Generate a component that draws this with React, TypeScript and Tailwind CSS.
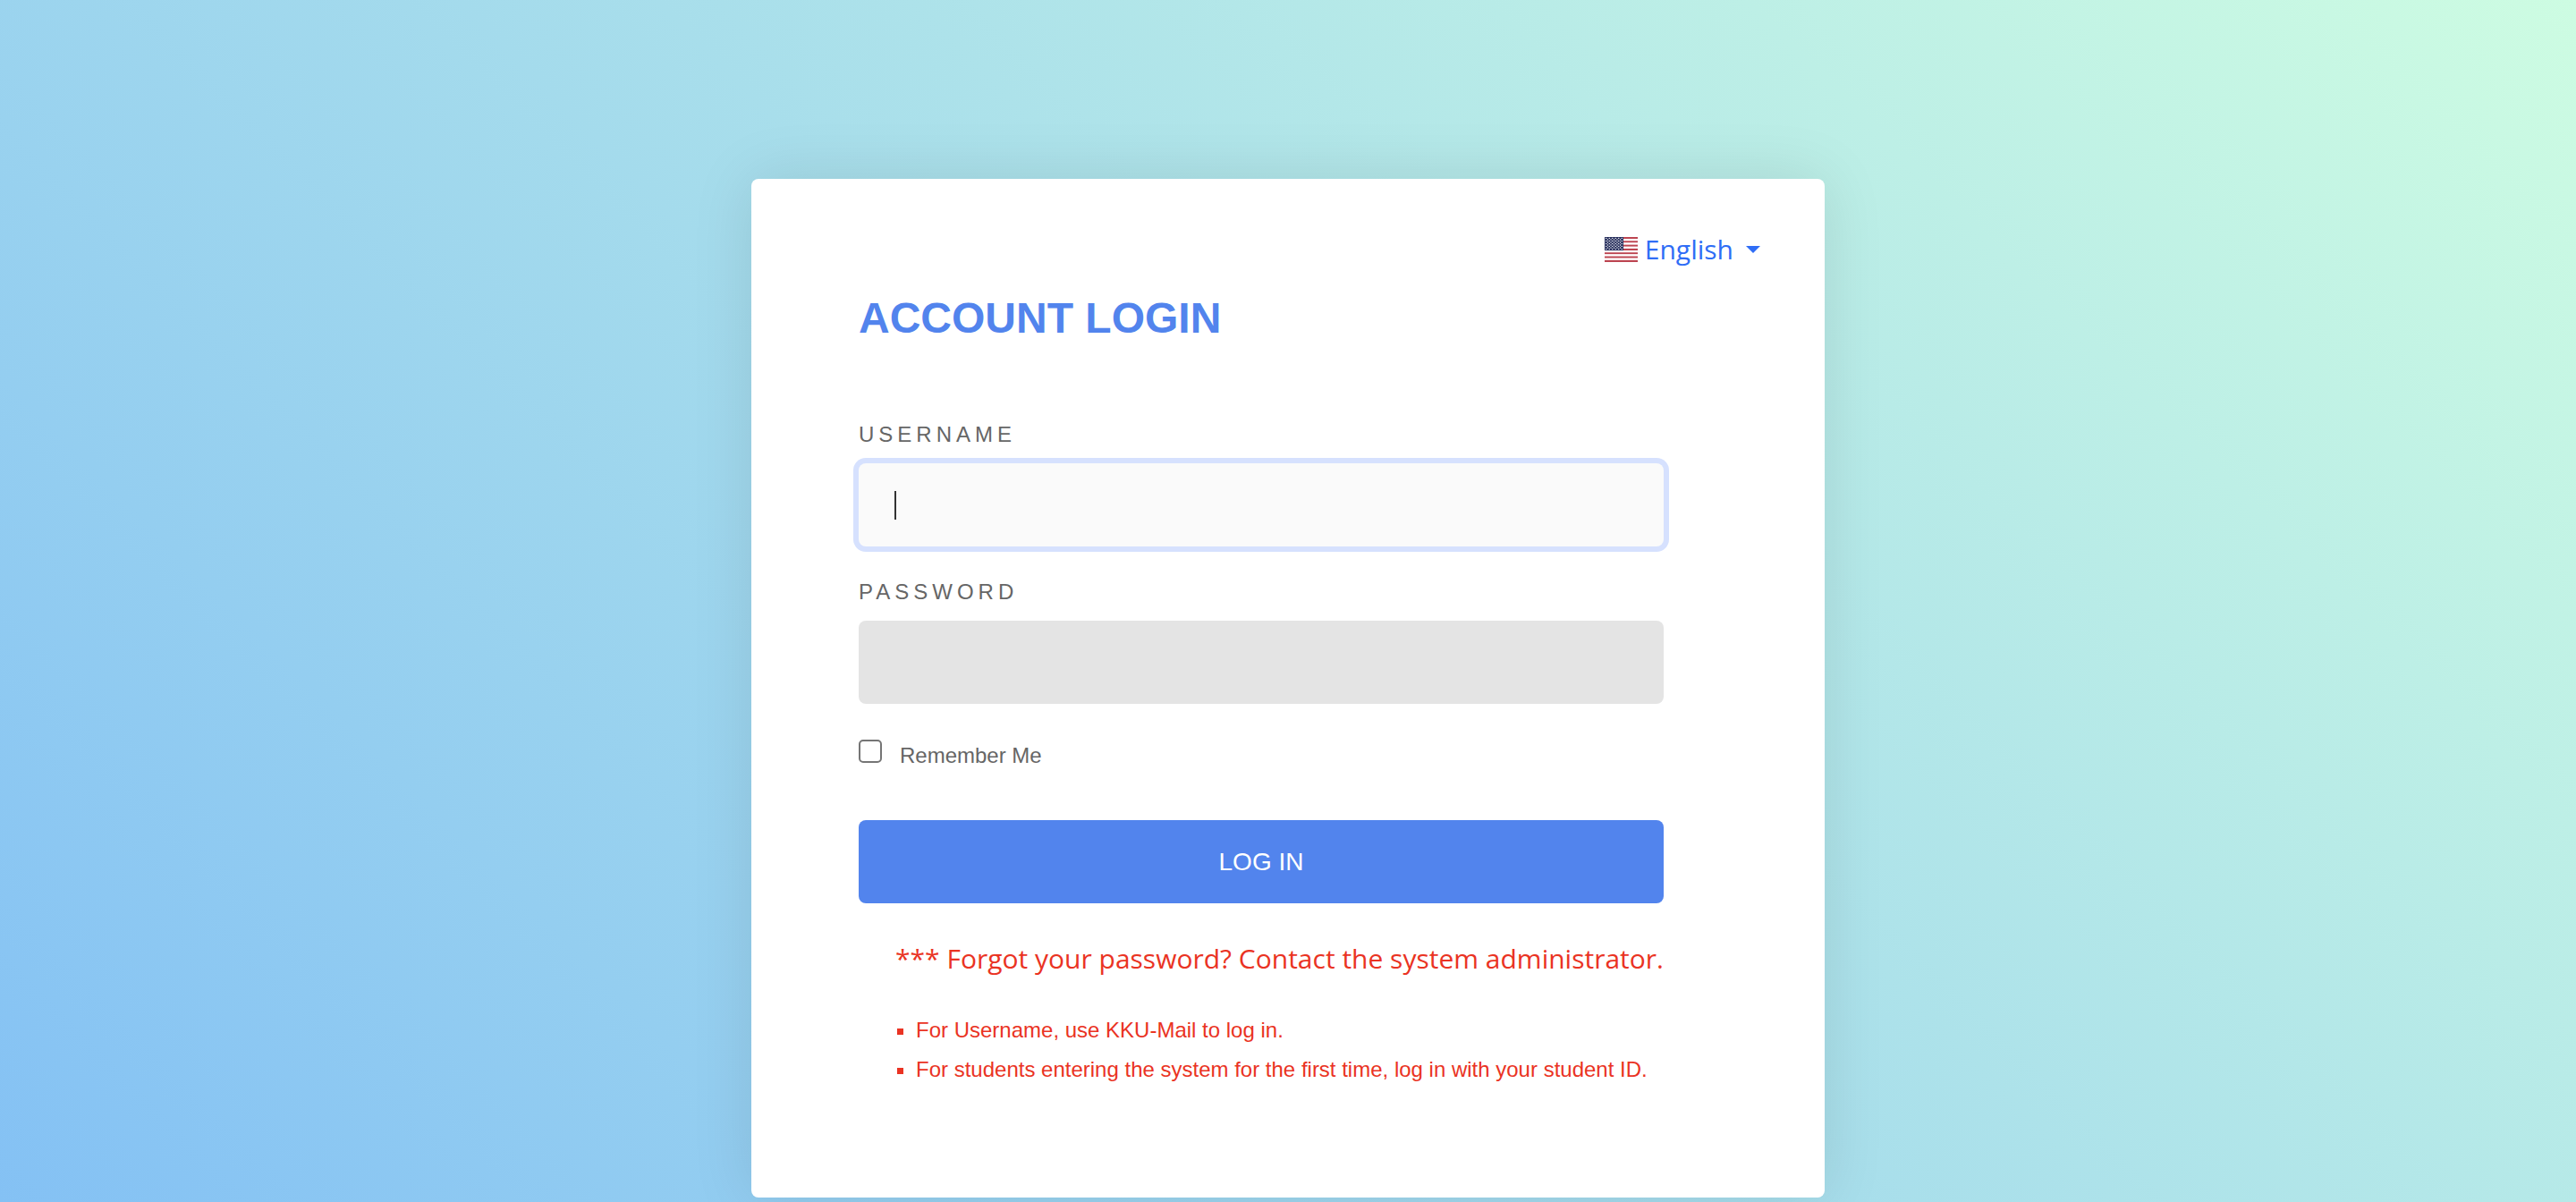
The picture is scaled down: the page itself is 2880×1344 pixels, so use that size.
import React, { useState } from "react";

function UsFlag() {
  const stripes = Array.from({ length: 13 }, (_, i) => i);
  const rows = Array.from({ length: 9 }, (_, i) => i);
  return (
    <svg viewBox="0 0 37 28" className="h-7 w-[37px]" aria-hidden="true">
      {stripes.map((i) => (
        <rect key={i} x="0" y={(i * 28) / 13} width="37" height={28 / 13} fill={i % 2 === 0 ? "#bd4551" : "#ffffff"} />
      ))}
      <rect width="21" height={(28 * 7) / 13} fill="#29315f" />
      {rows.map((r) =>
        Array.from({ length: r % 2 === 0 ? 6 : 5 }, (_, c) => (
          <circle key={`${r}-${c}`} cx={1.75 + c * 3.5 + (r % 2 === 0 ? 0 : 1.75)} cy={1.5 + r * 1.5} r="0.65" fill="#ffffff" />
        )),
      )}
    </svg>
  );
}

const labelClass = "block text-2xl leading-9 tracking-[5px] text-[#666666] uppercase";
const fieldClass = "block h-[93px] w-full rounded-lg px-10 text-[28px] text-[#333333] outline-none";

export default function App() {
  const [username, setUsername] = useState("");
  const [remember, setRemember] = useState(false);
  return (
    <div className="flex min-h-screen flex-col items-center bg-[linear-gradient(45deg,#84c1f4,#cdfce2)] pt-[200px] font-['Liberation_Sans',Arial,sans-serif]">
      <main className="w-full max-w-[1200px] rounded-lg bg-white pt-[54px] pr-[72px] pb-[121px] pl-[120px] shadow-[0_0_70px_rgba(0,0,0,0.1)]">
        <div className="flex justify-end">
          <button type="button" className="flex h-[50px] items-center text-[30px] text-[#2f6df6] font-['Open_Sans',sans-serif]">
            <UsFlag />
            <span className="ml-2 leading-[44px]">English</span>
            <svg viewBox="0 0 16 8" className="ml-3.5 h-2 w-4" aria-hidden="true">
              <path d="M0 0h16L8 8z" fill="currentColor" />
            </svg>
          </button>
        </div>
        <form className="mr-[108px]" onSubmit={(e) => e.preventDefault()}>
          <h1 className="mt-6 text-5xl leading-[56px] font-bold text-[#5284ed]">ACCOUNT LOGIN</h1>
          <label htmlFor="username" className={`${labelClass} mt-[84px]`}>
            Username
          </label>
          <div className="relative mt-3.5">
            <input
              id="username"
              type="text"
              autoFocus
              value={username}
              onChange={(e) => setUsername(e.target.value)}
              className={`${fieldClass} bg-[#fafafa] ring-[6px] ring-[#d6e1fe] placeholder-shown:caret-transparent`}
              placeholder=" "
            />
            {username === "" && (
              <span className="pointer-events-none absolute inset-y-0 left-10 flex items-center" aria-hidden="true">
                <span className="h-8 w-0.5 bg-[#333333]" />
              </span>
            )}
          </div>
          <label htmlFor="password" className={`${labelClass} mt-[33px]`}>
            Password
          </label>
          <input id="password" type="password" className={`${fieldClass} mt-3.5 bg-[#e4e4e4]`} />
          <div className="mt-10 flex items-start">
            <input
              id="remember"
              type="checkbox"
              checked={remember}
              onChange={(e) => setRemember(e.target.checked)}
              className="size-[26px] appearance-none rounded-[5px] border-2 border-[#757575] bg-white checked:bg-[#5284ed]"
            />
            <label htmlFor="remember" className="mt-0.5 ml-5 text-2xl leading-8 text-[#666666]">
              Remember Me
            </label>
          </div>
          <button type="submit" className="mt-14 block h-[93px] w-full rounded-lg bg-[#5284ed] text-[28px] text-white">
            LOG IN
          </button>
          <p className="mt-10 text-right text-[30px] leading-[44px] whitespace-nowrap text-[#ea3323] font-['Open_Sans',sans-serif]">
            *** Forgot your password? Contact the system administrator.
          </p>
          <ul className="mt-9 list-[square] pl-16 text-2xl leading-[44px] text-[#ea3323]">
            <li>For Username, use KKU-Mail to log in.</li>
            <li>For students entering the system for the first time, log in with your student ID.</li>
          </ul>
        </form>
      </main>
    </div>
  );
}
